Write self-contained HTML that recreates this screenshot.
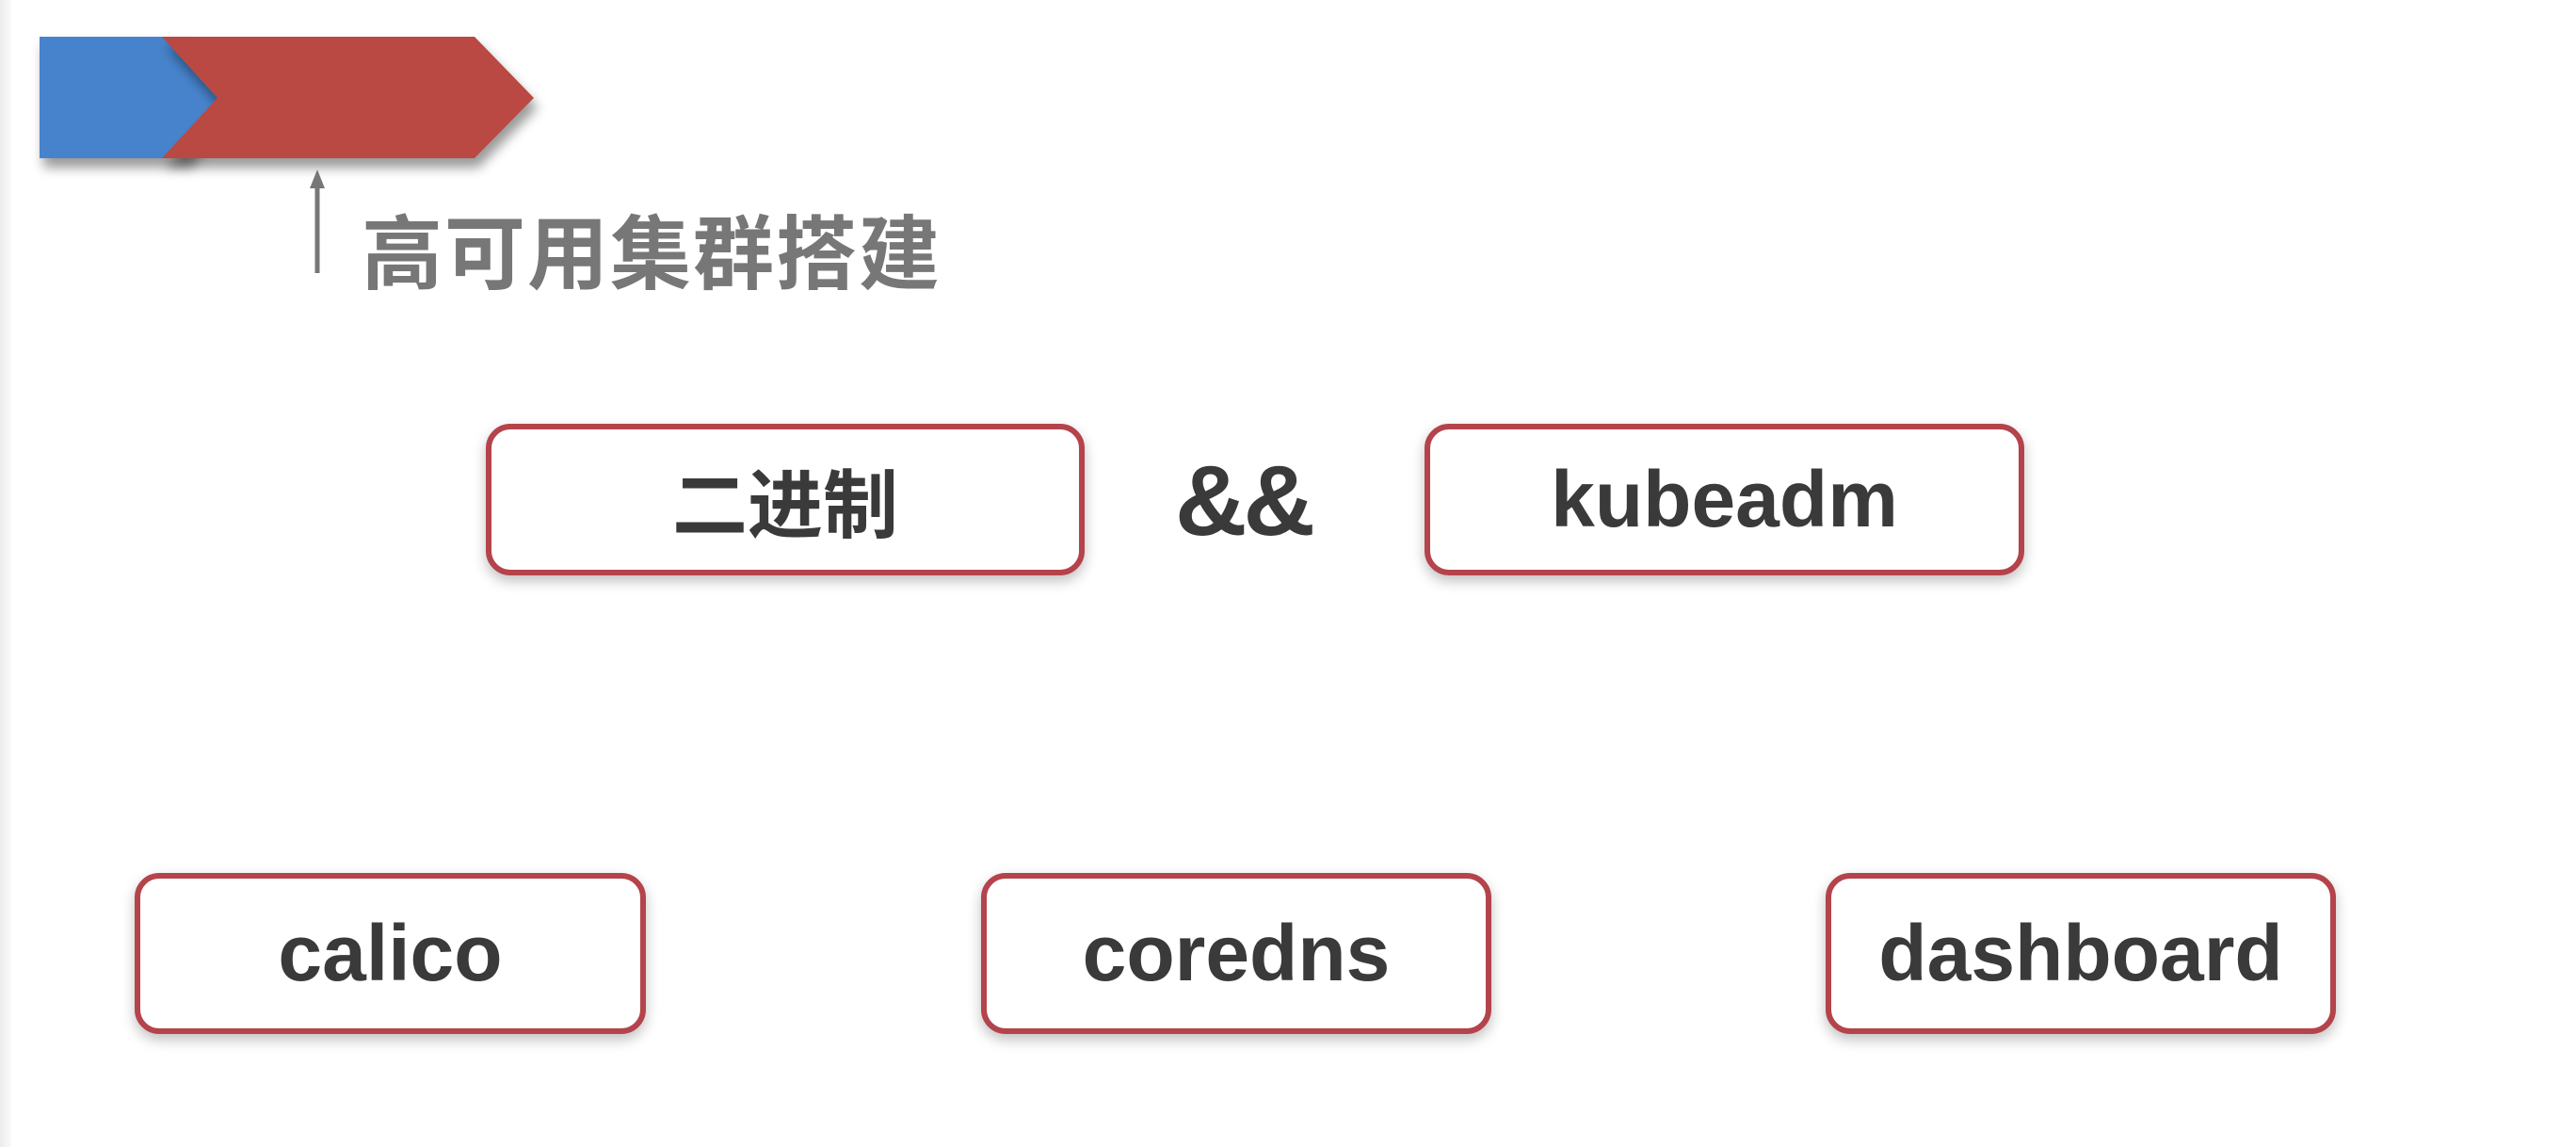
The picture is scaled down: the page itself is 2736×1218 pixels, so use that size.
<!DOCTYPE html>
<html><head><meta charset="utf-8"><style>
html,body{margin:0;padding:0}
body{width:2736px;height:1218px;position:relative;overflow:hidden;background:#fff;font-family:"Liberation Sans","Noto Sans CJK SC",sans-serif}
.strip{position:absolute;left:0;top:0;width:12px;height:1218px;background:linear-gradient(to right,#ececec,#fafafa)}
.box{position:absolute;box-sizing:border-box;border:6px solid #b4434b;border-radius:26px;background:#fff;box-shadow:0 6px 14px rgba(0,0,0,0.25);display:flex;align-items:center;justify-content:center;color:#3a3a3a;font-weight:bold;font-size:84px}
.t{position:absolute;color:#777;font-weight:bold;font-size:86px;left:384px;top:200px;letter-spacing:2px;font-family:"Noto Sans CJK SC",sans-serif}
</style></head><body>
<div class="strip"></div>
<svg width="700" height="320" style="position:absolute;left:0;top:0">
<defs><filter id="s" x="-10%" y="-10%" width="130%" height="140%"><feDropShadow dx="4" dy="10" stdDeviation="6" flood-color="#000" flood-opacity="0.4"/></filter></defs>
<polygon points="42,39 200,39 240,104 200,168 42,168" fill="#4683cc" filter="url(#s)"/>
<polygon points="172,39 504,39 567,104 504,168 172,168 231,104" fill="#b94a42" filter="url(#s)"/>
<line x1="337" y1="196" x2="337" y2="290" stroke="#777" stroke-width="5"/>
<polygon points="337,180 329,200 345,200" fill="#777"/>
</svg>
<div class="t">高可用集群搭建</div>
<div class="box" style="left:516px;top:450px;width:636px;height:161px;font-family:'Noto Sans CJK SC',sans-serif;font-size:80px">二进制</div>
<div style="position:absolute;left:1248px;top:472px;font-size:106px;font-weight:bold;color:#3a3a3a;letter-spacing:-4px">&amp;&amp;</div>
<div class="box" style="left:1513px;top:450px;width:637px;height:161px">kubeadm</div>
<div class="box" style="left:143px;top:927px;width:543px;height:171px">calico</div>
<div class="box" style="left:1042px;top:927px;width:542px;height:171px">coredns</div>
<div class="box" style="left:1939px;top:927px;width:542px;height:171px">dashboard</div>
</body></html>
